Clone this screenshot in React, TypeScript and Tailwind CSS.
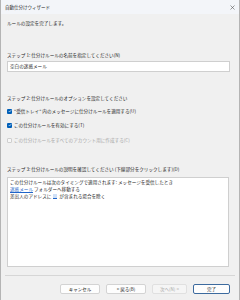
import React from 'react';

const font = { fontFamily: '"Noto Sans CJK JP", "Noto Sans", sans-serif' };

// small checkbox, Windows 11 style
const Check = ({ checked, disabled }: { checked?: boolean; disabled?: boolean }) => (
  <span
    className={`flex items-center justify-center w-[5px] h-[5px] rounded-[1px] shrink-0 ${
      checked ? 'bg-[#005fb8]' : disabled ? 'border border-[#cfcfcf] bg-[#f7f7f7]' : 'border border-[#8a8a8a] bg-white'
    }`}
  >
    {checked && (
      <svg width="4" height="4" viewBox="0 0 8 8">
        <path d="M1.5 4.2 L3.2 5.9 L6.6 2.2" fill="none" stroke="white" strokeWidth="1.3" />
      </svg>
    )}
  </span>
);

const Btn = ({ label, w, disabled, primary }: { label: string; w: string; disabled?: boolean; primary?: boolean }) => (
  <div
    className={`${w} h-[10px] flex items-center justify-center rounded-[2px] text-[4.5px] leading-none ${
      disabled
        ? 'bg-[#f5f5f5] border border-[#e0e0e0] text-[#a8a8a8]'
        : primary
          ? 'bg-[#fdfdfd] border border-[#3c6a9e] text-[#1a1a1a]'
          : 'bg-[#fdfdfd] border border-[#d3d3d3] text-[#1a1a1a]'
    }`}
  >
    {label}
  </div>
);

export default function App() {
  return (
    <div
      className="w-[240px] h-[300px] bg-[#f0f0f0] border-x border-[#b4b4b4] flex flex-col overflow-hidden text-[#262626]"
      style={font}
    >
      {/* Title bar */}
      <div className="h-[14px] bg-[#f3f5f9] flex items-center justify-between pl-[4px] pr-[4px] shrink-0">
        <span className="text-[4.5px] leading-none">自動仕分けウィザード</span>
        <svg width="5" height="5" viewBox="0 0 10 10">
          <path d="M1 1 L9 9 M9 1 L1 9" stroke="#555" strokeWidth="1.2" />
        </svg>
      </div>

      <div className="flex flex-col pl-[6px] pr-[9px] text-[4.6px]">
        <div className="mt-[5px] h-[8px] leading-[8px]">ルールの設定を完了します。</div>

        {/* Step 1 */}
        <div className="mt-[24px] h-[8px] leading-[8px]">ステップ 1: 仕分けルールの名前を指定してください(N)</div>
        <div className="mt-[2px] h-[11px] bg-white border border-[#cfcfcf] flex items-center pl-[2px]">
          空白の迷惑メール
        </div>

        {/* Step 2 */}
        <div className="mt-[22px] h-[8px] leading-[8px]">ステップ 2: 仕分けルールのオプションを設定してください</div>
        <div className="mt-[5px] h-[8px] flex items-center gap-[2px]">
          <Check checked />
          <span>"受信トレイ" 内のメッセージに仕分けルールを適用する(U)</span>
        </div>
        <div className="mt-[6px] h-[8px] flex items-center gap-[2px]">
          <Check checked />
          <span>この仕分けルールを有効にする(T)</span>
        </div>
        <div className="mt-[7px] h-[8px] flex items-center gap-[2px] text-[#a6a6a6]">
          <Check disabled />
          <span>この仕分けルールをすべてのアカウント用に作成する(C)</span>
        </div>

        {/* Step 3 */}
        <div className="mt-[21px] h-[8px] leading-[8px]">
          ステップ 3: 仕分けルールの説明を確認してください (下線部分をクリックします)(D)
        </div>
        <div className="mt-[4px] h-[90px] mr-[1px] bg-white border border-[#cfcfcf] pl-[2px] pt-[1px] leading-[7px]">
          <div>この仕分けルールは次のタイミングで適用されます: メッセージを受信したとき</div>
          <div>
            <span className="text-[#1e64c8] underline">迷惑メール</span> フォルダーへ移動する
          </div>
          <div className="flex items-center">
            <span>差出人のアドレスに</span>
            <span className="inline-block w-[4px] h-[5px] mx-[2px] bg-[#cfe0f7] border-b border-[#1e64c8]" />
            <span>が含まれる場合を除く</span>
          </div>
        </div>
      </div>

      {/* Footer */}
      <div className="mt-[8px] mx-[4px] h-px bg-[#d6d6d6]" />
      <div className="mt-[8px] flex pl-[59px] gap-[6px]">
        <Btn label="キャンセル" w="w-[40px]" />
        <Btn label="< 戻る(B)" w="w-[40px]" />
        <Btn label="次へ(N) >" w="w-[35px]" disabled />
        <Btn label="完了" w="w-[37px]" primary />
      </div>
    </div>
  );
}
